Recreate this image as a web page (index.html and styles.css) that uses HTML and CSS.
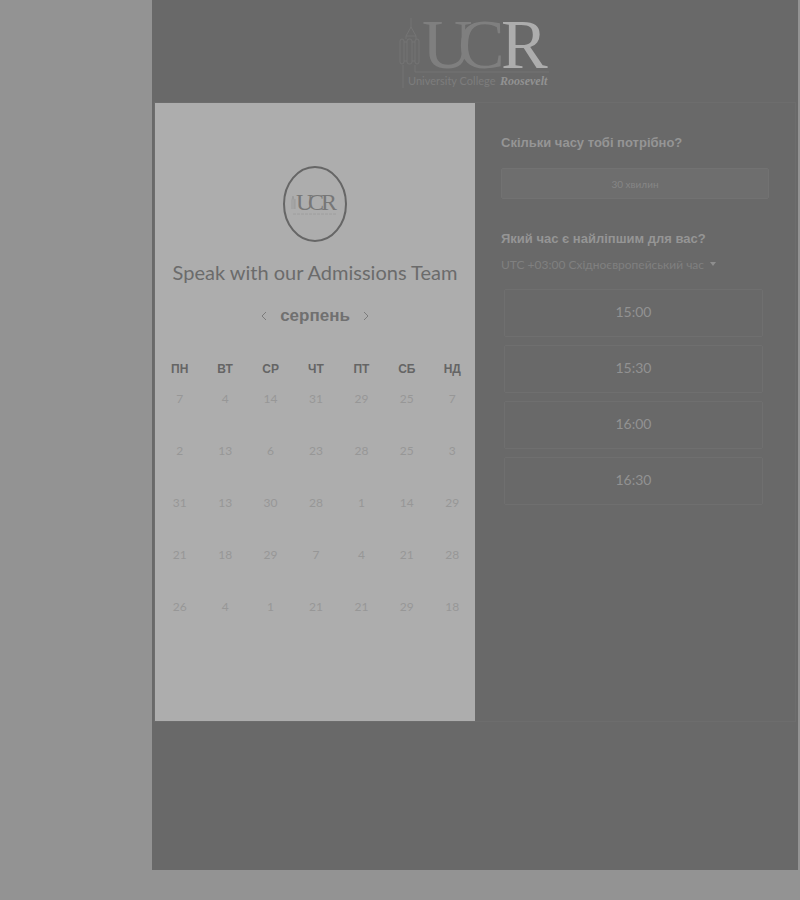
FILE: index.html
```html
<!DOCTYPE html>
<html lang="uk">
<head>
<meta charset="utf-8">
<meta name="viewport" content="width=device-width, initial-scale=1">
<title>Speak with our Admissions Team</title>
<link rel="stylesheet" href="styles.css">
</head>
<body>
<main class="scheduler">
  <header class="banner">
    <svg class="logo" width="154" height="80" viewBox="0 0 154 80" role="img" aria-label="University College Roosevelt">
      <g fill="none" stroke="#757575" stroke-width="1">
        <path d="M13 7v10M13 16l-5 9v3M13 16l5 9v3M8 25h10M5 54v23M17 54v7h134"/>
        <rect x="2" y="28" width="4" height="25" rx="2"/>
        <rect x="9" y="28" width="5" height="25" rx="2"/>
        <rect x="17" y="28" width="4" height="25" rx="2"/>
        <path d="M6 31h3M14 31h3M6 50h3M14 50h3"/>
      </g>
      <g class="logo-letters">
        <text x="24" y="57">U</text>
        <text x="60" y="57">C</text>
        <text class="logo-r" x="103" y="57">R</text>
      </g>
      <text class="logo-name" x="10" y="74">University College</text>
      <text class="logo-roosevelt" x="102" y="74">Roosevelt</text>
    </svg>
  </header>
  <div class="panels">
    <section class="calendar">
      <svg class="badge" width="66" height="78" viewBox="0 0 66 78" role="img" aria-label="UCR">
        <ellipse cx="33" cy="39" rx="31" ry="37" fill="none" stroke="#666666" stroke-width="2"/>
        <path d="M10 44V35l1-4 1 4v9M13 44V34" fill="none" stroke="#9b9b9b"/>
        <g class="badge-letters">
          <text x="14" y="45">U</text>
          <text x="26" y="45">C</text>
          <text x="39" y="45">R</text>
        </g>
        <path d="M11 49h44" stroke="#9e9e9e" stroke-dasharray="3 1"/>
      </svg>
      <h1 class="title">Speak with our Admissions Team</h1>
      <div class="month">
        <button class="arrow" type="button" aria-label="Попередній місяць"><svg width="6" height="10" viewBox="0 0 6 10"><path d="M5 1L1 5l4 4"/></svg></button>
        <h2 class="month-name">серпень</h2>
        <button class="arrow" type="button" aria-label="Наступний місяць"><svg width="6" height="10" viewBox="0 0 6 10"><path d="M1 1l4 4-4 4"/></svg></button>
      </div>
      <table class="days">
        <thead><tr><th>ПН</th><th>ВТ</th><th>СР</th><th>ЧТ</th><th>ПТ</th><th>СБ</th><th>НД</th></tr></thead>
        <tbody>
          <tr><td>7</td><td>4</td><td>14</td><td>31</td><td>29</td><td>25</td><td>7</td></tr>
          <tr><td>2</td><td>13</td><td>6</td><td>23</td><td>28</td><td>25</td><td>3</td></tr>
          <tr><td>31</td><td>13</td><td>30</td><td>28</td><td>1</td><td>14</td><td>29</td></tr>
          <tr><td>21</td><td>18</td><td>29</td><td>7</td><td>4</td><td>21</td><td>28</td></tr>
          <tr><td>26</td><td>4</td><td>1</td><td>21</td><td>21</td><td>29</td><td>18</td></tr>
        </tbody>
      </table>
    </section>
    <section class="times">
      <h2 class="question">Скільки часу тобі потрібно?</h2>
      <button class="duration" type="button">30 хвилин</button>
      <h2 class="question"><label for="zone">Який час є найліпшим для вас?</label></h2>
      <div class="zone">
        <select class="zone-select" id="zone"><option>UTC +03:00 Східноєвропейський час</option></select>
        <svg width="6" height="4" viewBox="0 0 6 4" aria-hidden="true"><path d="M0 0h6L3 4z" fill="#8e8e8e"/></svg>
      </div>
      <div class="slots">
        <button class="slot" type="button">15:00</button>
        <button class="slot" type="button">15:30</button>
        <button class="slot" type="button">16:00</button>
        <button class="slot" type="button">16:30</button>
      </div>
    </section>
  </div>
</main>
</body>
</html>
```
FILE: styles.css
```css
* {
  box-sizing: border-box;
}

body {
  margin: 0;
  min-height: 100vh;
  padding: 0 2px 30px 19%;
  display: flex;
  background: #939393;
  font-family: Lato, "Liberation Sans", sans-serif;
}

h1,
h2 {
  margin: 0;
}

button,
select {
  font-family: inherit;
}

.scheduler {
  flex: 1;
  min-width: 0;
  padding: 0 3px 149px;
  background: #696969;
}

.banner {
  display: flex;
  justify-content: center;
  padding: 11px 0;
  height: 103px;
}

.logo {
  overflow: visible;
}

.logo-letters,
.badge-letters {
  font-family: "Liberation Serif", serif;
}

.logo-letters {
  font-size: 70px;
  fill: #7f7f7f;
}

.logo-r {
  fill: #adadad;
}

.logo-name {
  font-family: Lato, sans-serif;
  font-size: 11px;
  fill: #7d7d7d;
}

.logo-roosevelt {
  font: italic bold 12px "Liberation Serif", serif;
  fill: #929292;
}

.panels {
  display: grid;
  grid-template-columns: 1fr 1fr;
  min-height: 618px;
  outline: 1px solid #6d6d6d;
}

.calendar {
  display: flex;
  flex-direction: column;
  align-items: center;
  padding-top: 62px;
  background: #adadad;
}

.badge-letters {
  font-size: 24px;
  fill: #777777;
}

.title {
  margin-top: 15px;
  font-size: 20px;
  line-height: 28px;
  font-weight: 400;
  color: #6b6b6b;
  white-space: nowrap;
}

.month {
  display: flex;
  align-items: center;
  gap: 8px;
  margin-top: 16px;
}

.month-name {
  font: bold 17px/28px "Liberation Sans", sans-serif;
  color: #707070;
}

.arrow {
  display: flex;
  padding: 5px;
  border: 0;
  background: none;
}

.arrow path {
  fill: none;
  stroke: #7c7c7c;
  stroke-width: 1;
}

.days {
  width: 100%;
  margin-top: 25px;
  padding-left: 2px;
  border-spacing: 0;
  table-layout: fixed;
  text-align: center;
}

.days th {
  height: 28px;
  padding: 0;
  font: bold 12px/28px "Liberation Sans", sans-serif;
  color: #656565;
}

.days td {
  height: 52px;
  padding: 6px 0 0;
  vertical-align: top;
  font-size: 12px;
  line-height: 20px;
  color: #979797;
}

.times {
  display: flex;
  flex-direction: column;
  padding: 28px 26px 0;
}

.question {
  font: bold 13px/24px "Liberation Sans", sans-serif;
  color: #959595;
}

.duration {
  height: 31px;
  margin: 13px 0 28px;
  border: 1px solid #727272;
  border-radius: 2px;
  background: #6e6e6e;
  color: #868686;
  font-size: 10px;
}

.zone {
  display: flex;
  align-items: center;
  gap: 5px;
  height: 26px;
}

.zone-select {
  appearance: none;
  padding: 0;
  border: 0;
  background: none;
  color: #808080;
  font-size: 12px;
}

.slots {
  display: grid;
  gap: 8px;
  margin: 12px 6px 0 3px;
}

.slot {
  height: 48px;
  padding: 0 0 4px;
  border: 1px solid #6f6f6f;
  border-radius: 2px;
  background: none;
  color: #929292;
  font-size: 14px;
}
```
